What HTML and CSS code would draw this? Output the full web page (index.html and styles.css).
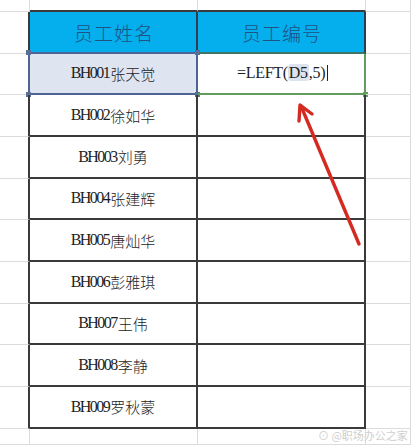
FILE: index.html
```html
<!DOCTYPE html>
<html>
<head>
<meta charset="utf-8">
<link rel="stylesheet" href="styles.css">
</head>
<body>
<div class="sheet">
  <div class="c"></div><div class="c top"></div><div class="c top"></div><div class="c"></div>

  <div class="c lead"></div><div class="c hd">员工姓名</div><div class="c hd hd2">员工编号</div><div class="c"></div>

  <div class="c lead lead-sel"></div>
  <div class="c t sel"><span class="code">BH001</span>张天觉
    <i class="h h-tl"></i><i class="h h-tr"></i><i class="h h-bl"></i><i class="h h-br"></i>
  </div>
  <div class="c t edit"><span class="fx">=LEFT(<span class="ref">D5</span>,5)</span><span class="caret"></span><i class="h h-g"></i></div>
  <div class="c"></div>

  <div class="c lead"></div><div class="c t"><span class="code">BH002</span>徐如华</div><div class="c t"></div><div class="c"></div>
  <div class="c lead"></div><div class="c t"><span class="code">BH003</span>刘勇</div><div class="c t"></div><div class="c"></div>
  <div class="c lead"></div><div class="c t"><span class="code">BH004</span>张建辉</div><div class="c t"></div><div class="c"></div>
  <div class="c lead"></div><div class="c t"><span class="code">BH005</span>唐灿华</div><div class="c t"></div><div class="c"></div>
  <div class="c lead"></div><div class="c t"><span class="code">BH006</span>彭雅琪</div><div class="c t"></div><div class="c"></div>
  <div class="c lead"></div><div class="c t"><span class="code">BH007</span>王伟</div><div class="c t"></div><div class="c"></div>
  <div class="c lead"></div><div class="c t"><span class="code">BH008</span>李静</div><div class="c t"></div><div class="c"></div>
  <div class="c lead"></div><div class="c t"><span class="code">BH009</span>罗秋蒙</div><div class="c t"></div><div class="c"></div>

  <div class="c"></div><div class="c"></div><div class="c"></div><div class="c"></div>

  <svg class="arrow" width="411" height="445" viewBox="0 0 411 445">
    <g stroke="#d42a22" stroke-width="3.4" fill="none" stroke-linecap="round" stroke-linejoin="round">
      <line x1="359" y1="244" x2="301" y2="106"/>
      <polyline points="299,121 300,105 312,114"/>
    </g>
  </svg>
  <div class="wm">&#x2299; @职场办公之家</div>
</div>
</body>
</html>
```

FILE: styles.css
```css
* { box-sizing: border-box; }
html, body { margin: 0; padding: 0; background: #fff; }
body { width: 411px; height: 445px; overflow: hidden; }

.sheet {
  position: relative;
  display: grid;
  grid-template-columns: 30px 168px 168px 1fr;
  grid-template-rows: 12px repeat(10, 41.67px) 1fr;
  width: 411px;
  height: 445px;
  font-family: "Noto Sans CJK SC", sans-serif;
  color: #222;
}

.c {
  position: relative;
  border-right: 1px solid #dcdcdc;
  border-bottom: 1px solid #dcdcdc;
}

.top { border-bottom: 2px solid #3a3a3a; }
.lead { border-right: 2px solid #3a3a3a; }
.lead-sel { border-right-color: #4d6494; }

.t {
  display: flex;
  align-items: center;
  justify-content: center;
  border-right: 2px solid #3a3a3a;
  border-bottom: 2px solid #3a3a3a;
  font-size: 15px;
  font-weight: 300;
  color: #1e1e1e;
}

.code {
  font-family: "Liberation Serif", serif;
  font-size: 16px;
  letter-spacing: -1.5px;
  margin-right: 1px;
}

.hd {
  display: flex;
  align-items: center;
  justify-content: center;
  background: #05aeec;
  border-right: 2px solid #2c3e50;
  border-bottom: 2px solid #4d6494;
  color: #1f5283;
  font-size: 19px;
  font-weight: 300;
  letter-spacing: 1px;
  padding-top: 2px;
  padding-left: 2px;
}
.hd2 { border-bottom-color: #3f7566; }

.sel {
  background: #dfe4f1;
  border-right-color: #4d6494;
  border-bottom-color: #4d6494;
}

.edit {
  border-right-color: #5f9e5c;
  border-bottom-color: #5f9e5c;
  font-family: "Liberation Serif", serif;
  font-size: 16px;
  font-weight: 400;
  padding-left: 39px;
  justify-content: flex-start;
}
.fx { letter-spacing: -0.3px; }
.ref {
  background: #dde4f0;
  border-radius: 3px;
  padding: 0 1px;
}
.caret {
  display: inline-block;
  width: 1px;
  height: 16px;
  margin-left: 2px;
  background: #222;
}

.h {
  position: absolute;
  width: 5px;
  height: 5px;
  background: #5a6f98;
}
.h-tl { left: -4px; top: -4px; }
.h-tr { right: -4px; top: -4px; }
.h-bl { left: -4px; bottom: -4px; }
.h-br { right: -4px; bottom: -4px; }
.h-g { right: -4px; bottom: -4px; background: #5f9e5c; }

.arrow {
  position: absolute;
  left: 0;
  top: 0;
  pointer-events: none;
}

.wm {
  position: absolute;
  left: 318px;
  top: 427px;
  font-size: 11px;
  color: #cfcfcf;
  white-space: nowrap;
  text-shadow: 0 0 1px #fff;
}
```
